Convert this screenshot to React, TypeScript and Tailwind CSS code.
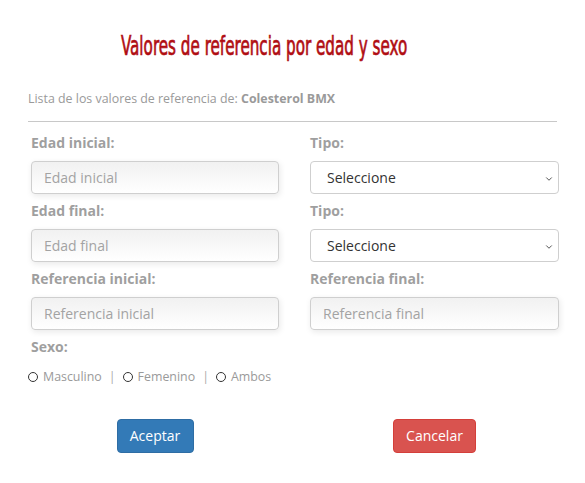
import { ChevronDown } from 'lucide-react';

const Label = ({ text, className = '' }: { text: string; className?: string }) => (
  <label className={`block h-5 text-sm font-bold leading-5 text-[#9f9f9f] ${className}`}>{text}</label>
);

const TextInput = ({ placeholder }: { placeholder: string }) => (
  <input
    type="text"
    placeholder={placeholder}
    className="mt-2 block h-[33px] w-full rounded border border-[#cfcfcf] bg-gradient-to-b from-[#f1f1f1] to-white px-3 text-sm text-[#555] shadow-[1px_2px_6px_rgba(0,0,0,0.09)] outline-none placeholder:text-[#a3a3a3]"
  />
);

const SelectBox = () => (
  <div className="relative mt-2 h-[33px] w-full rounded border border-[#cfcfcf] bg-white">
    <span className="absolute left-4 top-0 text-sm leading-[31px] text-[#333]">Seleccione</span>
    <ChevronDown className="absolute right-[4px] top-[12px] size-[10px] text-[#555]" strokeWidth={2.4} />
  </div>
);

const Radio = ({ text }: { text: string }) => (
  <span className="flex items-center gap-[5px]">
    <span className="inline-block size-[10px] rounded-full border-[1.5px] border-[#333]" />
    <span>{text}</span>
  </span>
);

export default function App() {
  return (
    <div className="h-[483px] w-[585px] overflow-hidden bg-white px-[28px] font-['Open_Sans',sans-serif]">
      <div className="overflow-hidden pl-[93px] pt-[30px]">
        <h1 className="inline-block origin-left scale-x-[0.625] whitespace-nowrap font-['DejaVu_Sans_Condensed',sans-serif] text-[27px] leading-[32px] text-[#b00d12] [-webkit-text-stroke:0.7px_#b00d12]">
          Valores de referencia por edad y sexo
        </h1>
      </div>
      <p className="mt-[27px] text-[12.4px] leading-5 text-[#9a9a9a]">
        Lista de los valores de referencia de: <b className="font-bold">Colesterol BMX</b>
      </p>
      <hr className="mt-[12px] border-t border-[#c8c8c8]" />

      <div className="ml-[3px] mt-[11px] grid w-[528px] grid-cols-[248px_249px] gap-x-[31px]">
        <div>
          <Label text="Edad inicial:" />
          <TextInput placeholder="Edad inicial" />
        </div>
        <div>
          <Label text="Tipo:" />
          <SelectBox />
        </div>
        <div className="mt-[7px]">
          <Label text="Edad final:" />
          <TextInput placeholder="Edad final" />
        </div>
        <div className="mt-[7px]">
          <Label text="Tipo:" />
          <SelectBox />
        </div>
        <div className="mt-[7px]">
          <Label text="Referencia inicial:" />
          <TextInput placeholder="Referencia inicial" />
        </div>
        <div className="mt-[7px]">
          <Label text="Referencia final:" />
          <TextInput placeholder="Referencia final" />
        </div>
      </div>

      <div className="mt-[7px]">
        <Label text="Sexo:" className="ml-[3px]" />
        <div className="mt-[10px] flex h-5 items-center gap-[7px] text-[12.4px] text-[#9a9a9a]">
          <Radio text="Masculino" />
          <span className="text-[#aaa]">|</span>
          <Radio text="Femenino" />
          <span className="text-[#aaa]">|</span>
          <Radio text="Ambos" />
        </div>
      </div>

      <div className="ml-[3px] mt-[32px] grid w-[528px] grid-cols-[248px_249px] gap-x-[31px]">
        <div className="flex justify-center">
          <button className="h-[34px] w-[77px] rounded border border-[#2e6da4] bg-[#337ab7] text-sm text-white">
            Aceptar
          </button>
        </div>
        <div className="flex justify-center">
          <button className="h-[34px] w-[83px] rounded border border-[#d43f3a] bg-[#d9534f] text-sm text-white">
            Cancelar
          </button>
        </div>
      </div>
    </div>
  );
}
